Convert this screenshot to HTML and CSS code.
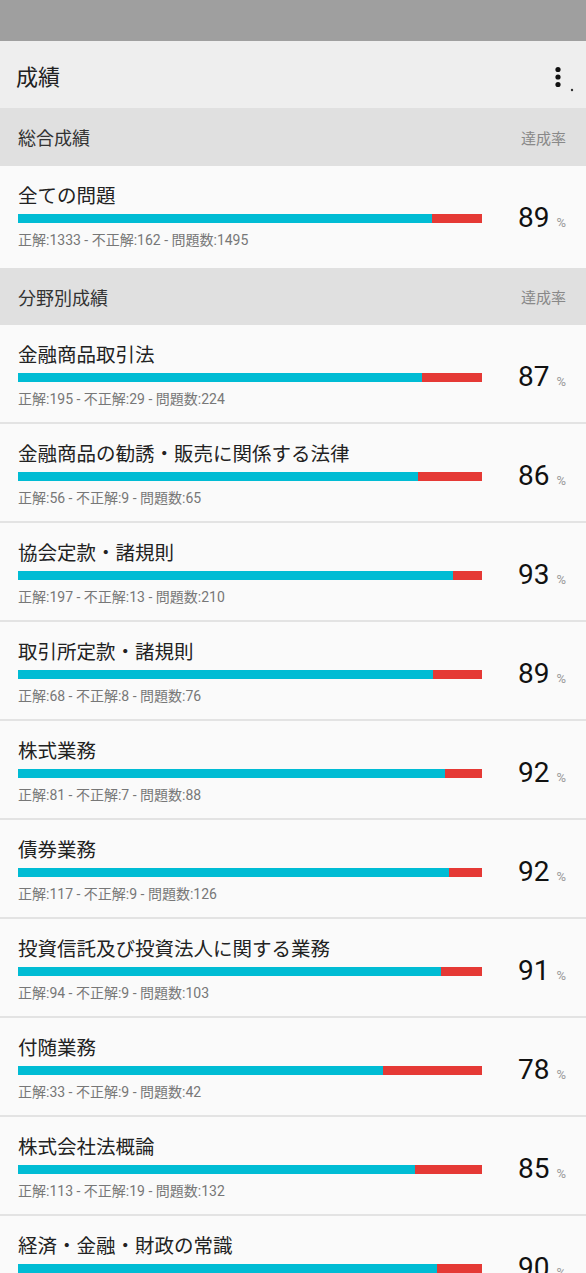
FILE: index.html
```html
<!DOCTYPE html>
<html lang="ja">
<head>
    <meta charset="UTF-8">
    <meta name="viewport" content="width=device-width, initial-scale=1.0">
    <title>成績</title>
    <link rel="stylesheet" href="styles.css">
</head>
<body>
    <div class="status-bar"></div>
    <div class="toolbar">
        <div class="toolbar-title">成績</div>
        <svg class="menu-icon" width="30" height="30" viewBox="0 0 30 30">
            <circle cx="10" cy="7.5" r="2.6" fill="#111"/>
            <circle cx="10" cy="15" r="2.6" fill="#111"/>
            <circle cx="10" cy="22.5" r="2.6" fill="#111"/>
            <circle cx="24" cy="28" r="1.2" fill="#333"/>
        </svg>
    </div>

    <div class="section">
        <div class="section-title">総合成績</div>
        <div class="section-label">達成率</div>
    </div>
    <div class="row row-last">
        <div class="row-main">
            <div class="row-title">全ての問題</div>
            <div class="bar"><div class="bar-ok" style="width: 89.16%"></div></div>
            <div class="row-sub">正解:1333 - 不正解:162 - 問題数:1495</div>
        </div>
        <div class="row-rate"><span class="rate-num">89</span><span class="rate-unit">%</span></div>
    </div>

    <div class="section">
        <div class="section-title">分野別成績</div>
        <div class="section-label">達成率</div>
    </div>
    <div class="row">
        <div class="row-main">
            <div class="row-title">金融商品取引法</div>
            <div class="bar"><div class="bar-ok" style="width: 87.05%"></div></div>
            <div class="row-sub">正解:195 - 不正解:29 - 問題数:224</div>
        </div>
        <div class="row-rate"><span class="rate-num">87</span><span class="rate-unit">%</span></div>
    </div>
    <div class="row">
        <div class="row-main">
            <div class="row-title">金融商品の勧誘・販売に関係する法律</div>
            <div class="bar"><div class="bar-ok" style="width: 86.15%"></div></div>
            <div class="row-sub">正解:56 - 不正解:9 - 問題数:65</div>
        </div>
        <div class="row-rate"><span class="rate-num">86</span><span class="rate-unit">%</span></div>
    </div>
    <div class="row">
        <div class="row-main">
            <div class="row-title">協会定款・諸規則</div>
            <div class="bar"><div class="bar-ok" style="width: 93.81%"></div></div>
            <div class="row-sub">正解:197 - 不正解:13 - 問題数:210</div>
        </div>
        <div class="row-rate"><span class="rate-num">93</span><span class="rate-unit">%</span></div>
    </div>
    <div class="row">
        <div class="row-main">
            <div class="row-title">取引所定款・諸規則</div>
            <div class="bar"><div class="bar-ok" style="width: 89.47%"></div></div>
            <div class="row-sub">正解:68 - 不正解:8 - 問題数:76</div>
        </div>
        <div class="row-rate"><span class="rate-num">89</span><span class="rate-unit">%</span></div>
    </div>
    <div class="row">
        <div class="row-main">
            <div class="row-title">株式業務</div>
            <div class="bar"><div class="bar-ok" style="width: 92.05%"></div></div>
            <div class="row-sub">正解:81 - 不正解:7 - 問題数:88</div>
        </div>
        <div class="row-rate"><span class="rate-num">92</span><span class="rate-unit">%</span></div>
    </div>
    <div class="row">
        <div class="row-main">
            <div class="row-title">債券業務</div>
            <div class="bar"><div class="bar-ok" style="width: 92.86%"></div></div>
            <div class="row-sub">正解:117 - 不正解:9 - 問題数:126</div>
        </div>
        <div class="row-rate"><span class="rate-num">92</span><span class="rate-unit">%</span></div>
    </div>
    <div class="row">
        <div class="row-main">
            <div class="row-title">投資信託及び投資法人に関する業務</div>
            <div class="bar"><div class="bar-ok" style="width: 91.26%"></div></div>
            <div class="row-sub">正解:94 - 不正解:9 - 問題数:103</div>
        </div>
        <div class="row-rate"><span class="rate-num">91</span><span class="rate-unit">%</span></div>
    </div>
    <div class="row">
        <div class="row-main">
            <div class="row-title">付随業務</div>
            <div class="bar"><div class="bar-ok" style="width: 78.57%"></div></div>
            <div class="row-sub">正解:33 - 不正解:9 - 問題数:42</div>
        </div>
        <div class="row-rate"><span class="rate-num">78</span><span class="rate-unit">%</span></div>
    </div>
    <div class="row">
        <div class="row-main">
            <div class="row-title">株式会社法概論</div>
            <div class="bar"><div class="bar-ok" style="width: 85.61%"></div></div>
            <div class="row-sub">正解:113 - 不正解:19 - 問題数:132</div>
        </div>
        <div class="row-rate"><span class="rate-num">85</span><span class="rate-unit">%</span></div>
    </div>
    <div class="row">
        <div class="row-main">
            <div class="row-title">経済・金融・財政の常識</div>
            <div class="bar"><div class="bar-ok" style="width: 90.3%"></div></div>
            <div class="row-sub">正解:121 - 不正解:13 - 問題数:134</div>
        </div>
        <div class="row-rate"><span class="rate-num">90</span><span class="rate-unit">%</span></div>
    </div>
</body>
</html>
```

FILE: styles.css
```css
body {
    margin: 0;
    background-color: #fafafa;
    color: #212121;
    font-family: Roboto, "Noto Sans CJK JP", sans-serif;
}
.status-bar {
    height: 41px;
    background: #9f9f9f;
}
.toolbar {
    height: 67px;
    background: #eeeeee;
    display: flex;
    align-items: center;
    justify-content: space-between;
    padding: 0 8px 0 16px;
    box-sizing: border-box;
}
.toolbar-title {
    font-size: 22px;
    color: #212121;
}
.menu-icon {
    display: block;
    margin-top: 4px;
}
.section {
    height: 58px;
    background: #e0e0e0;
    display: flex;
    align-items: center;
    justify-content: space-between;
    padding: 0 20px 0 18px;
    box-sizing: border-box;
}
.section + .row + .section {
    height: 57px;
}
.section-title {
    font-size: 18px;
    color: #333;
}
.section-label {
    font-size: 15px;
    color: #888;
}
.row {
    display: flex;
    align-items: flex-start;
    height: 99px;
    padding: 17px 20px 0 18px;
    box-sizing: border-box;
    border-bottom: 2px solid #e3e3e3;
    background: #fafafa;
}
.row-last {
    height: 102px;
    border-bottom: none;
}
.row-main {
    flex: 1;
}
.row-title {
    font-size: 19.5px;
    line-height: 28px;
    color: #222;
    white-space: nowrap;
}
.bar {
    margin-top: 3px;
    height: 9px;
    background: #e53935;
}
.bar-ok {
    height: 100%;
    background: #00bcd4;
}
.row-sub {
    margin-top: 8px;
    font-size: 14px;
    line-height: 19px;
    color: #777;
}
.row-rate {
    width: 84px;
    flex: none;
    text-align: right;
    margin-top: 18px;
    line-height: 34px;
}
.rate-num {
    font-size: 28px;
    color: #111;
}
.rate-unit {
    font-size: 13px;
    color: #999;
    margin-left: 7px;
}
```
